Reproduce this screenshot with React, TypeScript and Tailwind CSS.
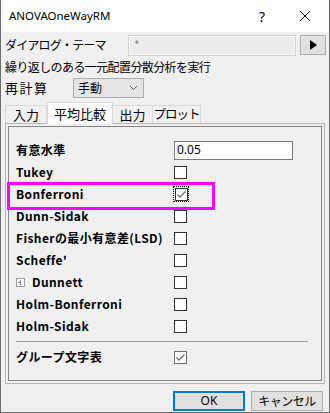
import React from "react";

const jp = { fontFamily: '"Noto Sans CJK JP", "Noto Sans", sans-serif' };
const ui = { fontFamily: '"Noto Sans", "Noto Sans CJK JP", sans-serif' };

function Check({ checked, focus, dim }: { checked?: boolean; focus?: boolean; dim?: boolean }) {
  return (
    <div className={focus ? "flex h-[16px] w-[16px] items-center justify-center border border-dotted border-black" : "flex h-[13px] w-[13px] items-center justify-center"}>
      <div className={`flex h-[13px] w-[13px] items-center justify-center border bg-white ${dim ? "border-[#6f6f6f]" : "border-[#333333]"}`}>
        {checked && (
          <svg width="11" height="11" viewBox="0 0 11 11">
            <polyline points="1.5,5.5 4,8 9.5,2.5" fill="none" stroke="#6e6e6e" strokeWidth="1.3" />
          </svg>
        )}
      </div>
    </div>
  );
}

function Row({ label, children, plus }: { label: string; children: React.ReactNode; plus?: boolean }) {
  return (
    <div className="flex h-[22px] items-center">
      <div className="flex w-[165px] items-center whitespace-nowrap pl-[7px] text-[12px] font-bold tracking-[0.4px] text-black" style={jp}>
        {plus && (
          <svg width="9" height="9" viewBox="0 0 9 9" className="mr-[7px]">
            <rect x="0.5" y="0.5" width="8" height="8" fill="white" stroke="#a0a0a0" />
            <line x1="2" y1="4.5" x2="5" y2="4.5" stroke="#808080" />
            <line x1="4.5" y1="2" x2="4.5" y2="7" stroke="#808080" />
          </svg>
        )}
        {label}
      </div>
      {children}
    </div>
  );
}

export default function App() {
  const boxes = ["Tukey", "Bonferroni", "Dunn-Sidak", "Fisherの最小有意差(LSD)", "Scheffe'", "Dunnett", "Holm-Bonferroni", "Holm-Sidak"];
  return (
    <div className="flex h-[413px] w-[330px] flex-col border-x border-b border-[#6e6e6e] bg-[#f0f0f0] text-black">
      {/* title bar */}
      <div className="flex h-[32px] shrink-0 items-center bg-white pl-[8px]" style={ui}>
        <span className="text-[11.5px]">ANOVAOneWayRM</span>
        <span className="ml-auto mr-[34px] text-[14px]">?</span>
        <svg width="12" height="12" viewBox="0 0 12 12" className="mr-[18px]">
          <path d="M1 1L11 11M11 1L1 11" stroke="#111" strokeWidth="1" />
        </svg>
      </div>

      <div className="flex flex-col px-[3px] pt-[2px]" style={jp}>
        <div className="flex h-[22px] items-center">
          <div className="w-[124px] whitespace-nowrap pl-[1px] text-[12px] tracking-[-0.8px]">ダイアログ・テーマ</div>
          <div className="flex h-[21px] w-[168px] items-center border border-[#d2d2d2] bg-[#ececec] pl-[5px] text-[12px] text-[#8a8a8a] shadow-[inset_0_0_0_1px_#f7f7f7]">*</div>
          <div className="ml-[4px] flex h-[20px] w-[26px] items-center justify-center border border-[#adadad] bg-[#e1e1e1]">
            <svg width="8" height="10" viewBox="0 0 8 10">
              <polygon points="1,0 8,5 1,10" fill="#000" />
            </svg>
          </div>
        </div>
        <div className="flex h-[21px] items-center whitespace-nowrap pl-[1px] text-[12px] tracking-[-0.6px]">繰り返しのある一元配置分散分析を実行</div>
        <div className="flex h-[22px] items-center">
          <div className="w-[69px] pl-[1px] text-[13px] tracking-[1.5px]">再計算</div>
          <div className="flex h-[20px] w-[71px] items-center border border-[#acacac] bg-[#e5e5e5] pl-[4px] pr-[5px] text-[12px]">
            <span>手動</span>
            <svg width="9" height="6" viewBox="0 0 9 6" className="ml-auto">
              <polyline points="1,1 4.5,4.5 8,1" fill="none" stroke="#606060" strokeWidth="1" />
            </svg>
          </div>
        </div>

        {/* tabs */}
        <div className="mt-[3px] flex h-[21px] items-end whitespace-nowrap pl-[1px] text-[13px]">
          <div className="flex h-[18px] w-[42px] items-center justify-center border border-b-0 border-[#d9d9d9] bg-[#f0f0f0]">入力</div>
          <div className="relative z-10 -mb-[1px] flex h-[22px] w-[66px] items-center justify-center border border-b-0 border-[#d9d9d9] bg-white">平均比較</div>
          <div className="flex h-[18px] w-[40px] items-center justify-center border border-b-0 border-l-0 border-[#d9d9d9] bg-[#f0f0f0]">出力</div>
          <div className="flex h-[18px] w-[48px] items-center justify-center overflow-hidden border border-b-0 border-l-0 border-[#d9d9d9] bg-[#f0f0f0] text-[12.5px] tracking-[-1px]">プロット</div>
        </div>

        {/* panel */}
        <div className="relative ml-[1px] h-[261px] w-[320px] border border-[#b4b4bc] p-[2px]">
          <div className="h-full w-full border border-[#858585] pt-[12px]">
            <Row label="有意水準">
              <div className="flex h-[19px] w-[119px] items-center border border-[#7a7a7a] bg-white pl-[2px] text-[12px]" style={ui}>0.05</div>
            </Row>
            {boxes.map((b) => (
              <Row key={b} label={b} plus={b === "Dunnett"}>
                <div className={b === "Bonferroni" ? "-ml-[1px]" : ""}>
                  <Check checked={b === "Bonferroni"} focus={b === "Bonferroni"} />
                </div>
              </Row>
            ))}
            <div className="ml-[7px] mt-[4px] h-[1px] w-[292px] bg-[#a0a0a0]" />
            <div className="mt-[4px]">
              <Row label="グループ文字表">
                <Check checked dim />
              </Row>
            </div>
          </div>
          <div className="absolute left-[1px] top-[58px] h-[28px] w-[208px] border-[3px] border-[#ff00ff]" />
        </div>

        {/* buttons */}
        <div className="mt-[7px] flex justify-end pr-[3px] text-[12px]">
          <div className="flex h-[20px] w-[72px] items-center justify-center border-2 border-[#0078d7] bg-[#e1e1e1]" style={ui}>OK</div>
          <div className="ml-[6px] flex h-[20px] w-[72px] items-center justify-center whitespace-nowrap border border-[#adadad] bg-[#e1e1e1] tracking-[-0.5px]">キャンセル</div>
        </div>
      </div>
    </div>
  );
}
